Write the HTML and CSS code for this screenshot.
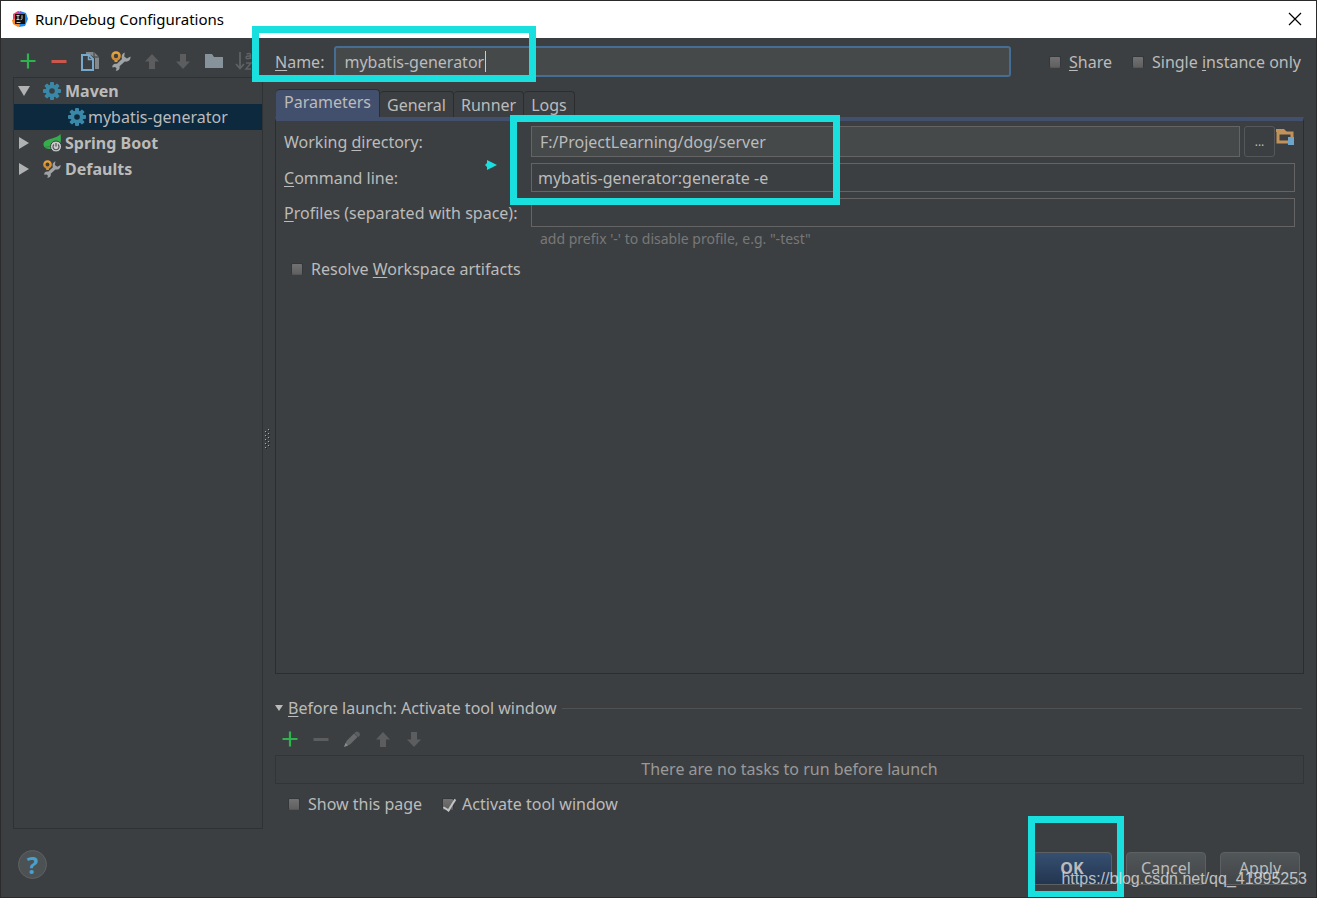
FILE: index.html
```html
<!DOCTYPE html>
<html lang="en">
<head>
<meta charset="utf-8">
<title>Run/Debug Configurations</title>
<link rel="stylesheet" href="styles.css">
</head>
<body>
<svg class="defs" width="0" height="0" aria-hidden="true">
  <defs>
    <linearGradient id="gold" x1="0" y1="0" x2="0" y2="1"><stop offset="0" stop-color="#e8a33d"/><stop offset="1" stop-color="#c98a35"/></linearGradient>
    <symbol id="plus" viewBox="0 0 20 20"><path d="M10 2.500v15M2.500 10h15" stroke="#2fb34f" stroke-width="2.200"/></symbol>
    <symbol id="minus" viewBox="0 0 20 20"><path d="M2.500 10.500h15" stroke="currentColor" stroke-width="3"/></symbol>
    <symbol id="up" viewBox="0 0 20 20"><path d="M10 3l7 7.500h-4V18H7v-7.500H3z" fill="#5b5d5f"/></symbol>
    <symbol id="down" viewBox="0 0 20 20"><path d="M10 18l7-7.500h-4V3H7v7.500H3z" fill="#5b5d5f"/></symbol>
    <symbol id="gear" viewBox="0 0 18 18">
      <g fill="#3a88a8"><rect x="7" y="0" width="4" height="18" rx="1"/><rect x="7" y="0" width="4" height="18" rx="1" transform="rotate(45 9 9)"/><rect x="7" y="0" width="4" height="18" rx="1" transform="rotate(90 9 9)"/><rect x="7" y="0" width="4" height="18" rx="1" transform="rotate(135 9 9)"/><circle cx="9" cy="9" r="6.500"/></g>
      <circle class="gear-hole" cx="9" cy="9" r="2.800"/>
    </symbol>
    <symbol id="wrench" viewBox="0 0 20 20">
      <path d="M19.500 5.500l-3.600 2-2.700-2 .6-4C11 2.500 10 5.500 11 8l-5 4.800C2.500 12 .8 14.500 1.500 16.500l2.600-.5 1.500 1.500-.9 2.300c3 .3 4.500-2 3.800-4.500l5.300-4.800c3.200.8 6.200-1.500 5.700-5z" fill="#a0a3a5"/>
      <circle cx="5" cy="5" r="3.500" fill="none" stroke="url(#gold)" stroke-width="2.600"/><path d="M3.500 9h3v2h-3z" fill="#d99a3a"/>
    </symbol>
  </defs>
</svg>

<div class="window">
  <header class="titlebar">
    <svg class="app-icon" width="18" height="18" viewBox="0 0 18 18" aria-hidden="true">
      <path d="M2 4l5-3 4 3-4 8-5-2z" fill="#f0456b"/><path d="M9 1l6 2 2 6-3 7-6 1z" fill="#1c86ee"/><path d="M1 10l4-2 4 8-2 1-5-3z" fill="#f98a2b"/><path d="M7 1l3 1-3 4z" fill="#b64ad0"/>
      <rect x="4" y="4" width="10" height="10" fill="#111"/><path d="M5.500 5.500h3M7 5.500v4M5.500 9.500h3M11 5.200v3.500q0 1-1.500 1M5.500 12.500h4" stroke="#ccc" fill="none"/>
    </svg>
    <h1 class="title">Run/Debug Configurations</h1>
    <button class="close" aria-label="Close"><svg width="14" height="14" viewBox="0 0 14 14"><path d="M1 1l12 12M13 1L1 13" stroke="#000" stroke-width="1.200"/></svg></button>
  </header>

  <div class="content">
    <aside class="sidebar">
      <div class="toolbar">
        <button class="tool" aria-label="Add"><svg><use href="#plus"/></svg></button>
        <button class="tool remove" aria-label="Remove"><svg><use href="#minus"/></svg></button>
        <button class="tool" aria-label="Copy"><svg viewBox="0 0 20 20"><path d="M6 1h8l5 5v12h-4V7l-4-3H6z" fill="#85888a"/><path d="M14 1v5h5" fill="none" stroke="#3c3f41"/><path d="M2 4h7l4 4v11H2z" fill="#3c3f41" stroke="#76a9cb" stroke-width="2"/><path d="M8.500 4v4.500H13" fill="none" stroke="#76a9cb" stroke-width="1.500"/></svg></button>
        <button class="tool" aria-label="Edit defaults"><svg><use href="#wrench"/></svg></button>
        <button class="tool" aria-label="Move up"><svg><use href="#up"/></svg></button>
        <button class="tool" aria-label="Move down"><svg><use href="#down"/></svg></button>
        <button class="tool" aria-label="Create folder"><svg viewBox="0 0 20 20"><path d="M1 3h7l2 3h9v11H1z" fill="#87939a"/></svg></button>
        <button class="tool" aria-label="Sort"><svg viewBox="0 0 20 20"><path d="M5 1v16M1 13l4 4.500L9 13" fill="none" stroke="#5f6264" stroke-width="1.800"/><path d="M11.500 3q4-1.500 4 1v4M15.500 5q-4.500-.2-4.500 1.600 0 2 4.500.4M11 12h5l-5 6h5" fill="none" stroke="#5f6264" stroke-width="1.500"/></svg></button>
      </div>
      <ul class="tree">
        <li class="node group"><svg class="arrow" viewBox="0 0 12 12"><path d="M0 1h12L6 11z"/></svg><svg class="icon"><use href="#gear"/></svg>Maven</li>
        <li class="node child selected"><svg class="icon"><use href="#gear"/></svg>mybatis-generator</li>
        <li class="node group"><svg class="arrow" viewBox="0 0 12 12"><path d="M1 0l10 6-10 6z"/></svg><svg class="icon" viewBox="0 0 18 18"><path d="M17.500 0c1 7 .5 14-8 15-5 .5-9-1-9-4.500C.5 4 12 6 17.500 0z" fill="#35ad4d"/><path d="M2 13c6 0 10-2 13-6" stroke="#2b8a3d" fill="none"/><circle cx="13" cy="12.500" r="5.500" fill="#c8cacb" stroke="#3c3f41"/><path d="M11 10.500a3 3 0 1 0 4 0M13 9v3.500" fill="none" stroke="#505355" stroke-width="1.200"/></svg>Spring Boot</li>
        <li class="node group"><svg class="arrow" viewBox="0 0 12 12"><path d="M1 0l10 6-10 6z"/></svg><svg class="icon"><use href="#wrench"/></svg>Defaults</li>
      </ul>
    </aside>

    <div class="splitter"><svg width="6" height="20" viewBox="0 0 6 20"><path d="M1.500 2v18M4.500 0v18" stroke="#a9abac" stroke-dasharray="1 3"/><path d="M2.500 3v17M5.500 1v18" stroke="#222" stroke-dasharray="1 3"/></svg></div>

    <main class="main">
      <div class="name-row">
        <label for="name"><u>N</u>ame:</label>
        <div class="name-field"><input id="name" class="field focused" type="text" value="mybatis-generator"><i class="caret"></i></div>
        <div class="name-options">
          <label class="check"><input type="checkbox"><span><u>S</u>hare</span></label>
          <label class="check"><input type="checkbox"><span>Single <u>i</u>nstance only</span></label>
        </div>
        <span class="mark mark-name"></span>
      </div>

      <div class="tabs" role="tablist">
        <button class="tab active" role="tab" aria-selected="true">Parameters</button>
        <button class="tab" role="tab">General</button>
        <button class="tab" role="tab">Runner</button>
        <button class="tab" role="tab">Logs</button>
      </div>

      <section class="panel">
        <div class="form">
          <label for="dir">Working <u>d</u>irectory:</label>
          <div class="dir-row">
            <input id="dir" class="field filled" type="text" value="F:/ProjectLearning/dog/server">
            <button class="browse" aria-label="Browse">...</button>
            <button class="project" aria-label="Select Maven project"><svg width="19" height="18" viewBox="0 0 19 18"><path d="M2 5h14v9H2z" fill="none" stroke="#c1935b" stroke-width="3"/><path d="M0 1h8l3 3H0z" fill="#c1935b"/><path d="M12 9h6v8h-6z" fill="#6fa5c8"/></svg></button>
          </div>
          <label for="cmd"><u>C</u>ommand line:</label>
          <input id="cmd" class="field" type="text" value="mybatis-generator:generate -e">
          <label for="profiles"><u>P</u>rofiles (separated with space):</label>
          <input id="profiles" class="field" type="text">
        </div>
        <p class="hint">add prefix '-' to disable profile, e.g. "-test"</p>
        <label class="check resolve"><input type="checkbox"><span>Resolve <u>W</u>orkspace artifacts</span></label>
        <span class="mark mark-form"></span>
        <svg class="pointer" width="12" height="10" viewBox="0 0 12 10"><path d="M2 0l10 5-10 5V7L0 5l2-2z" fill="#19dfdf"/></svg>
      </section>

      <section class="before">
        <h2 class="before-title"><svg width="8" height="6" viewBox="0 0 8 6"><path d="M0 0h8L4 6z" fill="#bbb"/></svg><span><u>B</u>efore launch: Activate tool window</span></h2>
        <div class="toolbar">
          <button class="tool" aria-label="Add task"><svg><use href="#plus"/></svg></button>
          <button class="tool" aria-label="Remove task"><svg><use href="#minus"/></svg></button>
          <button class="tool" aria-label="Edit task"><svg viewBox="0 0 20 20"><path d="M2.500 17.500l2-5.500L12 4.500 15.500 8 8 15.500z" fill="#67696b"/><path d="M13 3.500q2-2 4 0t0 4l-1 .5-3.500-3.500z" fill="#5c5e60"/><path d="M2 18l1.500-4 2.500 2.500z" fill="#8a8c8d"/></svg></button>
          <button class="tool" aria-label="Task up"><svg><use href="#up"/></svg></button>
          <button class="tool" aria-label="Task down"><svg><use href="#down"/></svg></button>
        </div>
        <div class="tasks">There are no tasks to run before launch</div>
        <div class="before-options">
          <label class="check"><input type="checkbox"><span>Show this page</span></label>
          <label class="check"><input type="checkbox" checked><span>Activate tool window</span></label>
        </div>
      </section>
    </main>
  </div>

  <footer class="footer">
    <button class="help" aria-label="Help">?</button>
    <div class="actions">
      <button class="btn primary">OK</button>
      <button class="btn">Cancel</button>
      <button class="btn">Apply</button>
      <span class="mark mark-ok"></span>
    </div>
    <span class="watermark">https://blog.csdn.net/qq_41895253</span>
  </footer>
</div>
</body>
</html>
```
FILE: styles.css
```css
* { box-sizing: border-box; }

body {
  margin: 0;
  background: #3c3f41;
  color: #bbbbbb;
  font: 16px/22px "Noto Sans", "Open Sans", sans-serif;
}

button, input { font: inherit; color: inherit; margin: 0; }
button { background: none; border: 0; padding: 0; }
svg { display: block; flex: none; }
.defs { position: absolute; }
u { text-decoration-thickness: 1px; text-underline-offset: 2px; text-decoration-skip-ink: none; }

.window {
  display: flex;
  flex-direction: column;
  min-height: 100vh;
  border: 1px solid #2b2b2b;
  overflow: hidden;
}

.titlebar {
  display: flex;
  align-items: center;
  gap: 6px;
  height: 37px;
  padding: 0 14px 1px 10px;
  background: #ffffff;
  color: #000000;
}
.title { flex: 1; margin: 0; font-size: 15px; font-weight: 400; }

.content {
  flex: 1;
  display: grid;
  grid-template-columns: 250px 12px 1fr;
  padding: 0 12px;
}

.sidebar { display: flex; flex-direction: column; }
.toolbar { display: flex; align-items: center; gap: 11px; color: #5b5d5f; }
.sidebar .toolbar { height: 39px; padding: 7px 0 0 5px; }
.tool, .tool svg { width: 20px; height: 20px; }
.tool { flex: none; }
.remove { color: #c9574b; }

.tree {
  flex: 1;
  margin: 0;
  padding: 0;
  border: 1px solid #2f3234;
  list-style: none;
}
.node { --hole: #3c3f41; display: flex; align-items: center; height: 26px; }
.group { padding-left: 4px; font-weight: 700; }
.child { padding-left: 54px; }
.selected { --hole: #0d293e; background: #0d293e; }
.arrow { width: 12px; height: 12px; margin-right: 13px; fill: #afb1b3; }
.icon { width: 18px; height: 18px; margin-right: 4px; }
.child .icon { margin-right: 2px; }
.gear-hole { fill: var(--hole); }

.splitter { display: flex; align-items: center; padding: 10px 0 0 1px; }

.main { display: flex; flex-direction: column; min-width: 0; }

.name-row {
  position: relative;
  display: flex;
  align-items: center;
  height: 47px;
  padding-right: 3px;
}
.name-field { position: relative; flex: 1; margin-left: 10px; }
.name-options { display: flex; gap: 20px; margin-left: 38px; }

.field {
  display: block;
  width: 100%;
  min-width: 0;
  height: 29px;
  padding: 0 6px;
  border: 1px solid #646464;
  border-radius: 0;
  background: transparent;
  outline: none;
}
.filled { height: 31px; padding: 0 8px; background: #45494a; }
.focused {
  height: 31px;
  padding: 0 8px;
  border: 2px solid #466d94;
  border-radius: 3px;
  background: #45494a;
}
.caret { position: absolute; left: 151px; top: 5px; width: 1px; height: 21px; background: #cccccc; }

.check { display: flex; align-items: center; gap: 8px; white-space: nowrap; }
.check input {
  appearance: none;
  position: relative;
  width: 12px;
  height: 12px;
  border: 1px solid #35383a;
  border-bottom-color: #555759;
  border-radius: 2px;
  background: linear-gradient(#727272, #606060);
}
.check input:checked::after {
  content: "";
  position: absolute;
  left: 3px;
  top: -2px;
  width: 5px;
  height: 12px;
  border: solid #c4c4c4;
  border-width: 0 2px 2px 0;
  transform: rotate(32deg);
}

.tabs { display: flex; align-items: flex-end; height: 33px; padding: 0 1px; }
.tab {
  height: 27px;
  padding: 0 7px;
  border: 1px solid #2b2d2f;
  border-left-width: 0;
  border-radius: 4px 4px 0 0;
}
.active { height: 29px; padding: 0 8px 4px; background: #43506d; }

.panel {
  position: relative;
  flex: 1;
  margin-top: -1px;
  padding: 5px 8px 0;
  border: 1px solid #2b2d2f;
  border-top: 4px solid #43506d;
}
.form { display: grid; grid-template-columns: 238px 1fr; column-gap: 9px; row-gap: 6px; align-items: center; }
.form label { white-space: nowrap; }
.dir-row { display: flex; align-items: flex-start; }
.browse {
  flex: none;
  width: 31px;
  height: 31px;
  margin-left: 4px;
  border: 1px solid #55585a;
  border-radius: 3px;
  font-size: 12px;
}
.project { flex: none; margin: 2px 0 0 1px; }
.hint { margin: 0 0 0 256px; color: #787878; font-size: 14px; line-height: 24px; }
.resolve { margin: 7px 0 0 7px; }

.before { padding: 23px 0 14px; }
.before-title { display: flex; align-items: center; gap: 5px; margin: 0 2px 0 0; font-size: 16px; font-weight: 400; }
.before-title::after { content: ""; flex: 1; height: 1px; background: #515151; }
.before .toolbar { margin: 10px 0 6px 5px; }
.tasks { height: 29px; border: 1px solid #323537; color: #999999; text-align: center; line-height: 27px; }
.before-options { display: flex; gap: 20px; margin: 9px 0 0 13px; }

.footer { position: relative; display: flex; justify-content: space-between; align-items: flex-start; height: 68px; padding: 21px 16px 0 17px; }
.help {
  width: 29px;
  height: 29px;
  border: 1px solid #5e6162;
  border-radius: 50%;
  background: #4c5153;
  color: #4a9fcb;
  font-size: 24px;
  font-weight: 700;
  line-height: 26px;
}
.actions { position: relative; display: flex; gap: 14px; padding-top: 2px; }
.btn {
  width: 80px;
  height: 33px;
  padding-bottom: 2px;
  border: 1px solid #5c6062;
  border-radius: 4px;
  background: linear-gradient(#515658, #414547);
}
.primary { background: linear-gradient(#365070, #233550); font-weight: 700; }
.watermark {
  position: absolute;
  right: 9px;
  bottom: 7px;
  color: rgba(225, 225, 225, 0.8);
  font: 16px/22px "Liberation Sans", Arial, sans-serif;
}

.mark { position: absolute; border: 7px solid #19dfdf; pointer-events: none; }
.mark-name { left: -23px; top: -12px; width: 284px; height: 56px; }
.mark-form { left: 234px; top: -6px; width: 330px; height: 90px; }
.mark-ok { left: -4px; top: -34px; width: 96px; height: 82px; }
.pointer { position: absolute; left: 209px; top: 39px; }
```
